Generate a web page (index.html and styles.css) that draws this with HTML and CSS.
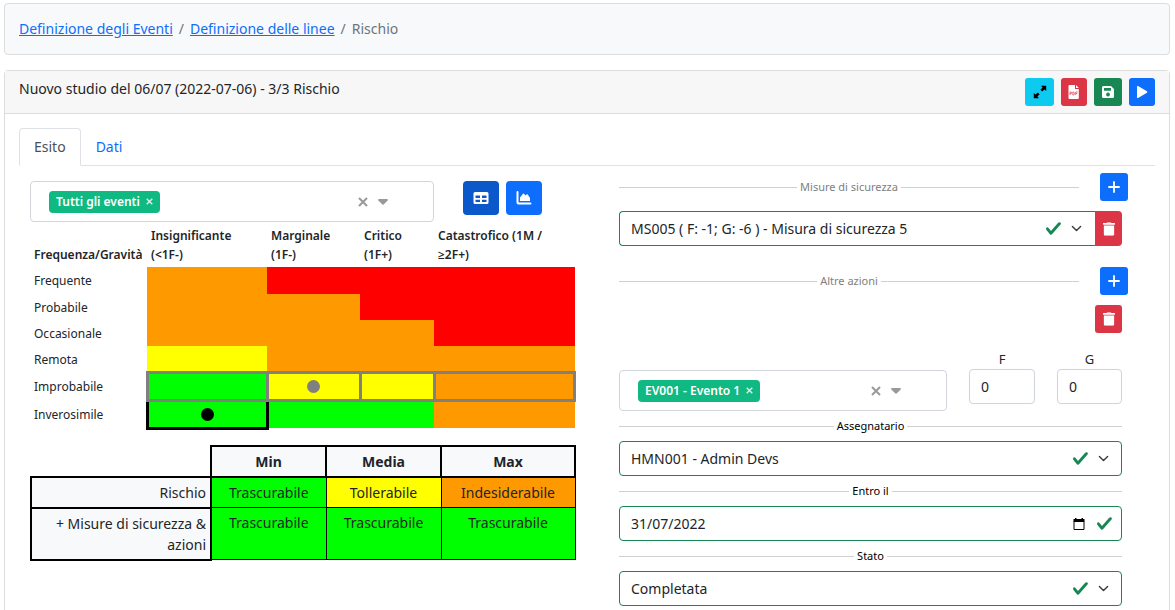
FILE: index.html
```html
<!DOCTYPE html>
<html lang="it">
<head>
<meta charset="utf-8">
<title>Rischio</title>
<link rel="stylesheet" href="styles.css">
</head>
<body>
<svg class="sprite" aria-hidden="true">
  <symbol id="i-check" viewBox="0 0 8 8"><path fill="#198754" d="M2.3 6.73.6 4.53c-.4-1.04.46-1.4 1.1-.8l1.100 1.400 3.400-3.800c.6-.63 1.600-.27 1.200.7l-4 4.600c-.43.5-.8.4-1.100.1z"/></symbol>
  <symbol id="i-chevron" viewBox="0 0 16 16"><path fill="none" stroke="#343a40" stroke-width="2" stroke-linecap="round" stroke-linejoin="round" d="m2 5 6 6 6-6"/></symbol>
  <symbol id="i-trash" viewBox="0 0 448 512"><path fill="currentColor" d="M432 32H312l-9-19A24 24 0 0 0 281 0H167a24 24 0 0 0-22 13l-9 19H16A16 16 0 0 0 0 48v32a16 16 0 0 0 16 16h416a16 16 0 0 0 16-16V48a16 16 0 0 0-16-16zM32 128v336a48 48 0 0 0 48 48h288a48 48 0 0 0 48-48V128z"/></symbol>
  <symbol id="i-plus" viewBox="0 0 12 12"><path fill="none" stroke="currentColor" stroke-width="1.800" stroke-linecap="round" d="M6 1v10M1 6h10"/></symbol>
  <symbol id="i-x" viewBox="0 0 10 10"><path fill="none" stroke="currentColor" stroke-width="2" d="m1 1 8 8M9 1 1 9"/></symbol>
  <symbol id="i-caret" viewBox="0 0 10 6"><path fill="currentColor" d="M1 0h8a1 1 0 0 1 .7 1.600L5.600 5.600a1 1 0 0 1-1.200 0L.3 1.600A1 1 0 0 1 1 0z"/></symbol>
</svg>

<nav class="crumbs" aria-label="breadcrumb">
  <a href="#eventi">Definizione degli Eventi</a><span>/</span><a href="#linee">Definizione delle linee</a><span>/</span><span>Rischio</span>
</nav>

<main class="card">
  <header class="card-header">
    <div>Nuovo studio del 06/07 (2022-07-06) - 3/3 Rischio</div>
    <div class="actions">
      <button class="btn info" type="button" aria-label="Espandi"><svg class="ico14" viewBox="0 0 14 14"><path fill="#000" d="M8 .8h4.700a.5.5 0 0 1 .5.5V6l-1.700-1.600-2.300 2.200-1.800-1.800 2.200-2.300zM6 13.200H1.300a.5.5 0 0 1-.5-.5V8l1.700 1.600 2.300-2.200 1.800 1.800-2.200 2.300z"/></svg></button>
      <button class="btn danger slim" type="button" aria-label="Esporta PDF"><svg class="ico14" viewBox="0 0 14 14"><path fill="#fff" d="M2.500 0H8v4h3.800v9a1 1 0 0 1-1 1H2.500a1 1 0 0 1-1-1V1a1 1 0 0 1 1-1zM9 0l2.800 3H9z"/><path fill="none" stroke="#dc3545" stroke-width=".7" d="M3 10V7h1q.7 0 .7.800T4 8.700H3M5.800 7v3h.6q1 0 1-1.500T6.400 7zM8.700 10V7h2M8.700 8.500h1.600"/></svg></button>
      <button class="btn success" type="button" aria-label="Salva"><svg class="ico14" viewBox="0 0 14 14"><path fill="#fff" fill-rule="evenodd" d="M2.500 1H10l3 3v7.500a1.500 1.500 0 0 1-1.500 1.500h-9A1.500 1.500 0 0 1 1 11.500v-9A1.500 1.500 0 0 1 2.500 1zM3 3v2.800h7V3zm4 4.600a1.900 1.900 0 1 0 .01 0z"/></svg></button>
      <button class="btn primary slim" type="button" aria-label="Avanti"><svg class="ico14" viewBox="0 0 14 14"><path fill="#fff" d="M2 1.800v10.400q0 1.200 1.100.7l8.800-5.200q.9-.7 0-1.400L3.100 1.100Q2 .6 2 1.800z"/></svg></button>
    </div>
  </header>

  <div class="card-body">
    <div class="tabs" role="tablist">
      <button class="tab active" type="button" role="tab" aria-selected="true">Esito</button>
      <button class="tab" type="button" role="tab" aria-selected="false">Dati</button>
    </div>

    <div class="cols">
      <section class="left">
        <div class="filter">
          <div class="multi">
            <span class="chip">Tutti gli eventi<button type="button" aria-label="Rimuovi"><svg viewBox="0 0 10 10"><use href="#i-x"/></svg></button></span>
            <button class="multi-btn" type="button" aria-label="Svuota"><svg class="x" viewBox="0 0 10 10"><use href="#i-x"/></svg></button>
            <button class="multi-btn" type="button" aria-label="Apri"><svg class="caret" viewBox="0 0 10 6"><use href="#i-caret"/></svg></button>
          </div>
          <div class="views">
            <button class="btn view pressed" type="button" aria-label="Tabella"><svg class="ico16" viewBox="0 0 16 16"><path fill="#fff" fill-rule="evenodd" d="M2 2h12a1.500 1.500 0 0 1 1.500 1.500v9a1.500 1.500 0 0 1-1.500 1.500H2A1.500 1.500 0 0 1 .5 12.500v-9A1.500 1.500 0 0 1 2 2zM2.500 5.500V8H7V5.500zm6.500 0V8h4.500V5.500zM2.500 9.700V12H7V9.700zM9 9.700V12h4.500V9.700z"/></svg></button>
            <button class="btn view primary" type="button" aria-label="Grafico"><svg class="ico16" viewBox="0 0 16 16"><path fill="none" stroke="#fff" stroke-width="2" stroke-linecap="round" d="M1.500 2v10.500q0 1 1 1h12"/><path fill="#fff" d="M4 11V7.500l3-3.700q.5-.5 1 0l1.500 1.700 1-1q.6-.5 1.200 0L14 8v3z"/></svg></button>
          </div>
        </div>

        <table class="matrix">
          <colgroup><col class="m0"><col class="m1"><col class="m2"><col class="m3"><col class="m4"></colgroup>
          <thead><tr><th>Frequenza/Gravità</th><th>Insignificante<br>(&lt;1F-)</th><th>Marginale<br>(1F-)</th><th>Critico<br>(1F+)</th><th>Catastrofico (1M /<br>≥2F+)</th></tr></thead>
          <tbody>
            <tr class="first"><th>Frequente</th><td class="o"></td><td class="r"></td><td class="r"></td><td class="r"></td></tr>
            <tr><th>Probabile</th><td class="o"></td><td class="o"></td><td class="r"></td><td class="r"></td></tr>
            <tr><th>Occasionale</th><td class="o"></td><td class="o"></td><td class="o"></td><td class="r"></td></tr>
            <tr><th>Remota</th><td class="y"></td><td class="o"></td><td class="o"></td><td class="o"></td></tr>
            <tr class="tall"><th>Improbabile</th><td class="g before"></td><td class="y before"><span class="dot gray"></span></td><td class="y before"></td><td class="o before"></td></tr>
            <tr class="tall"><th>Inverosimile</th><td class="g after"><span class="dot"></span></td><td class="g"></td><td class="g"></td><td class="o"></td></tr>
          </tbody>
        </table>

        <table class="summary">
          <colgroup><col class="s0"><col class="s1"><col class="s1"><col class="s3"></colgroup>
          <thead><tr><td></td><th>Min</th><th>Media</th><th>Max</th></tr></thead>
          <tbody>
            <tr><th>Rischio</th><td class="g">Trascurabile</td><td class="y">Tollerabile</td><td class="o">Indesiderabile</td></tr>
            <tr><th>+ Misure di sicurezza &amp; azioni</th><td class="g">Trascurabile</td><td class="g">Trascurabile</td><td class="g">Trascurabile</td></tr>
          </tbody>
        </table>
      </section>

      <section class="right">
        <div class="section-head">
          <div class="divider muted">Misure di sicurezza</div>
          <button class="btn primary" type="button" aria-label="Aggiungi misura"><svg class="plus" viewBox="0 0 12 12"><use href="#i-plus"/></svg></button>
        </div>
        <div class="measure">
          <div class="field">
            <select class="control joined" aria-label="Misura di sicurezza"><option>MS005 ( F: -1; G: -6 ) - Misura di sicurezza 5</option></select>
            <span class="marks"><svg class="check" viewBox="0 0 8 8"><use href="#i-check"/></svg><svg class="chev" viewBox="0 0 16 16"><use href="#i-chevron"/></svg></span>
          </div>
          <button class="btn danger narrow joined-btn" type="button" aria-label="Elimina misura"><svg class="trash" viewBox="0 0 448 512"><use href="#i-trash"/></svg></button>
        </div>
        <div class="section-head">
          <div class="divider muted">Altre azioni</div>
          <button class="btn primary" type="button" aria-label="Aggiungi azione"><svg class="plus" viewBox="0 0 12 12"><use href="#i-plus"/></svg></button>
        </div>
        <div class="remove-row">
          <button class="btn danger narrow" type="button" aria-label="Elimina azione"><svg class="trash" viewBox="0 0 448 512"><use href="#i-trash"/></svg></button>
        </div>
        <div class="event-row">
          <div class="multi">
            <span class="chip">EV001 - Evento 1<button type="button" aria-label="Rimuovi"><svg viewBox="0 0 10 10"><use href="#i-x"/></svg></button></span>
            <button class="multi-btn" type="button" aria-label="Svuota"><svg class="x" viewBox="0 0 10 10"><use href="#i-x"/></svg></button>
            <button class="multi-btn" type="button" aria-label="Apri"><svg class="caret" viewBox="0 0 10 6"><use href="#i-caret"/></svg></button>
          </div>
          <div class="num"><label for="f">F</label><input class="control plain" id="f" type="number" value="0"></div>
          <div class="num"><label for="g">G</label><input class="control plain" id="g" type="number" value="0"></div>
        </div>

        <label class="divider" for="assegnatario">Assegnatario</label>
        <div class="field">
          <select class="control" id="assegnatario"><option>HMN001 - Admin Devs</option></select>
          <span class="marks"><svg class="check" viewBox="0 0 8 8"><use href="#i-check"/></svg><svg class="chev" viewBox="0 0 16 16"><use href="#i-chevron"/></svg></span>
        </div>
        <label class="divider" for="entro">Entro il</label>
        <div class="field">
          <input class="control" id="entro" type="text" value="31/07/2022">
          <span class="marks date"><svg class="cal" viewBox="0 0 12 12"><path d="M2 0h1.500v1h5V0H10v1h1.500v3H.5V1H2z"/><path fill="none" stroke="#000" d="M1 3.500V11.500h10V3.500"/></svg><svg class="check" viewBox="0 0 8 8"><use href="#i-check"/></svg></span>
        </div>
        <label class="divider" for="stato">Stato</label>
        <div class="field">
          <select class="control" id="stato"><option>Completata</option></select>
          <span class="marks"><svg class="check" viewBox="0 0 8 8"><use href="#i-check"/></svg><svg class="chev" viewBox="0 0 16 16"><use href="#i-chevron"/></svg></span>
        </div>
      </section>
    </div>
  </div>
</main>
</body>
</html>
```
FILE: styles.css
```css
* { box-sizing: border-box; }
body {
  margin: 0;
  padding: 3px 5px 0 4px;
  font: 14px/21px "Noto Sans", "Open Sans", sans-serif;
  color: #212529;
  background: #fff;
}
button, input, select { font: inherit; color: inherit; margin: 0; }
button { cursor: pointer; }
svg { display: block; }
.sprite { display: none; }

.crumbs {
  display: flex;
  gap: 6px;
  padding: 15px 14px;
  margin-bottom: 15px;
  border: 1px solid #dcdddd;
  border-radius: 4px;
  background: #f8f9fa;
  color: #6c757d;
  line-height: 20px;
}
.crumbs a { color: #0d6efd; }

.card { border: 1px solid #dcdddd; border-radius: 4px; }
.card-header {
  display: flex;
  justify-content: space-between;
  padding: 7px 14px;
  border-bottom: 1px solid #dcdddd;
  background: #f7f7f7;
}
.actions { display: flex; gap: 7px; }
.card-body { padding: 14px 14px 16px; }

.btn {
  display: flex;
  align-items: center;
  justify-content: center;
  flex: none;
  width: 28px;
  height: 28px;
  padding: 0;
  border: 0;
  border-radius: 3px;
  color: #fff;
}
.narrow { width: 27px; }
.slim { width: 26px; }
.info { width: 29px; background: #0dcaf0; }
.danger { background: #dc3545; }
.success { background: #198754; }
.primary { background: #0d6efd; }
.pressed { background: #0a58ca; }
.view { width: 36px; height: 34px; border-radius: 4px; }
.ico14 { width: 14px; height: 14px; }
.ico16 { width: 16px; height: 16px; }
.plus { width: 12px; height: 12px; }
.trash { width: 12px; height: 14px; }

.tabs { display: flex; border-bottom: 1px solid #dee2e6; }
.tab {
  padding: 8px 14px;
  margin-bottom: -1px;
  border: 1px solid transparent;
  border-radius: 4px 4px 0 0;
  background: none;
  color: #0d6efd;
  line-height: 20px;
}
.tab.active { border-color: #dee2e6 #dee2e6 #fff; background: #fff; color: #495057; }

.cols { display: grid; grid-template-columns: 1fr 1fr; }
.left { padding: 15px 11px 0; }
.right { padding: 7px 33px 0 32px; }

.filter { display: flex; gap: 29px; }
.filter .multi { flex: 0 1 404px; }
.views { display: flex; gap: 7px; }
.multi {
  display: flex;
  align-items: center;
  height: 41px;
  padding: 0 40px 0 18px;
  border: 1px solid #d1d5db;
  border-radius: 4px;
  background: #fff;
}
.chip {
  display: flex;
  align-items: center;
  gap: 6px;
  height: 22px;
  margin-right: auto;
  padding: 0 7px;
  border-radius: 4px;
  background: #10b981;
  color: #fff;
  font-size: 12px;
  font-weight: 600;
  white-space: nowrap;
}
.chip button { padding: 0; border: 0; background: none; color: #d5f3e8; }
.chip svg { width: 7px; height: 7px; }
.multi-btn { padding: 0 5px; border: 0; background: none; color: #999; }
.multi-btn .x { width: 10px; height: 10px; }
.multi-btn .caret { width: 10px; height: 6px; }

table { width: 100%; border-collapse: collapse; table-layout: fixed; }
.o { background: #f90; }
.r { background: #f00; }
.y { background: #ff0; }
.g { background: #0f0; }

.matrix { margin-top: 4px; font-size: 12px; line-height: 19px; }
.m0 { width: 117px; }
.m1 { width: 120px; }
.m2 { width: 93px; }
.m3 { width: 74px; }
.matrix th { padding: 0 4px; text-align: left; vertical-align: bottom; font-weight: 600; white-space: nowrap; }
.matrix thead th { padding-bottom: 3px; }
.matrix tbody th { height: 26px; font-weight: 400; vertical-align: middle; }
.matrix .first th { height: 27px; }
.matrix .tall th { height: 28px; }
.matrix td { padding: 0; }
.before { border: 3px solid #808080; }
.after { border: 3px solid #000; border-top-color: #808080; }
.dot { display: block; width: 13px; height: 13px; margin: 0 auto; border-radius: 50%; background: #000; }
.dot.gray { background: #808080; }

.summary { margin-top: 15px; text-align: center; }
.s0 { width: 180px; }
.s1 { width: 115px; }
.summary th, .summary td { padding: 4px; vertical-align: top; }
.summary tbody td { border: 1px solid #000; }
.summary th { border: 2px solid #000; background: #f8f9fa; }
.summary tbody th { text-align: right; font-weight: 400; }

.section-head { display: flex; align-items: center; gap: 21px; margin-right: -6px; }
.section-head .divider { flex: 1; margin: 0; }
.divider {
  display: flex;
  align-items: center;
  gap: 3px;
  margin: 7px 0;
  font-size: 11px;
  line-height: 16px;
  color: #000;
}
.divider::before, .divider::after { content: ""; flex: 1; border-top: 1px solid #d0d0d0; }
.muted { color: #808080; }
.measure { display: flex; margin: 10px 0 21px; }
.measure .field { flex: 1; }
.remove-row { display: flex; justify-content: flex-end; margin: 10px 0 16px; }
.field { position: relative; }
.control {
  display: block;
  width: 100%;
  height: 35px;
  padding: 0 11px;
  border: 1px solid #198754;
  border-radius: 4px;
  background: #fff;
  appearance: none;
  outline: 0;
}
.joined { border-right: 0; border-radius: 4px 0 0 4px; }
.joined-btn { height: 35px; border-radius: 0 4px 4px 0; }
.plain { border-color: #ced4da; appearance: textfield; }
.plain::-webkit-inner-spin-button { display: none; }
.marks {
  position: absolute;
  inset: 0 13px 0 auto;
  display: flex;
  align-items: center;
  gap: 9px;
  pointer-events: none;
}
.marks.date { right: 9px; gap: 11px; }
.check { width: 17px; height: 17px; }
.chev { width: 11px; height: 11px; }
.cal { width: 12px; height: 12px; }

.event-row { display: grid; grid-template-columns: 1fr 66px 65px; column-gap: 22px; align-items: end; }
.event-row .multi { margin-top: 21px; }
.num { align-self: start; }
.num label { display: block; text-align: center; font-size: 13px; line-height: 20px; }
```
